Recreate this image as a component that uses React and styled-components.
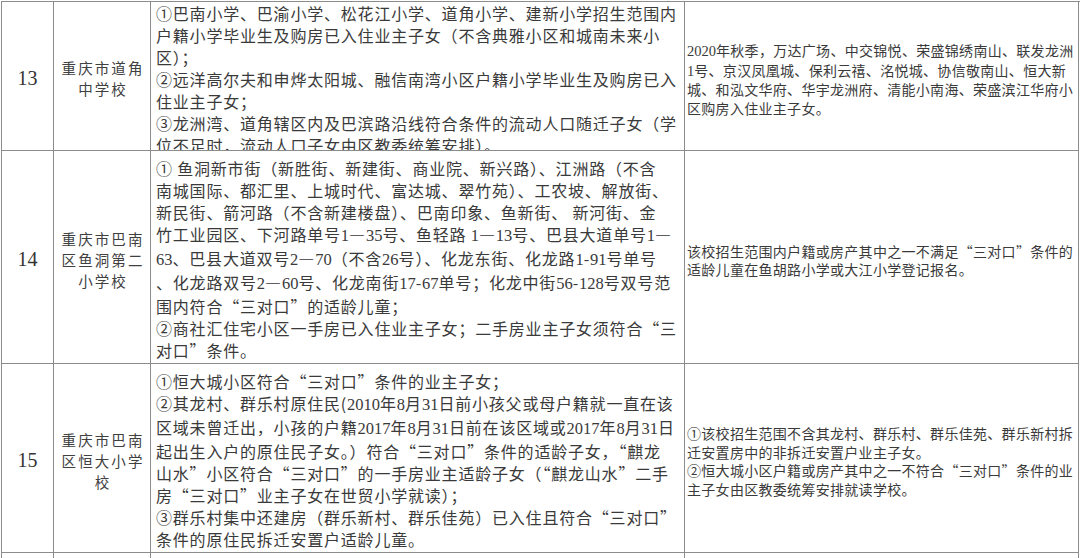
import React from "react";
import styled, { createGlobalStyle } from "styled-components";

const GlobalStyle = createGlobalStyle`
  html, body {
    margin: 0;
    padding: 0;
    background: #fff;
  }
  body {
    font-family: "Noto Sans CJK SC", "Liberation Serif", serif;
    color: #3a3a3a;
  }
`;

const Sheet = styled.div`
  margin: 1px 0 0 1px;
  width: 1078px;
  border-top: 1px solid #8c8c8c;
  border-left: 1px solid #8c8c8c;
  background: #fff;
`;

const Row = styled.div`
  display: grid;
  grid-template-columns: 52px 97px 534px 394px;
  height: ${(p) => p.$h}px;
`;

const Cell = styled.div`
  box-sizing: border-box;
  border-right: 1px solid #8c8c8c;
  border-bottom: 1px solid #8c8c8c;
  overflow: hidden;
  display: flex;
  flex-direction: column;
  justify-content: ${(p) => (p.$top ? "flex-start" : "center")};
`;

const NumCell = styled(Cell)`
  align-items: center;
  padding-top: 5px;
  font-family: "Liberation Serif", serif;
  font-size: 20px;
  color: #333;
`;

const NameCell = styled(Cell)`
  align-items: center;
  padding-top: 4px;
  font-size: 14.5px;
  line-height: 21px;
  letter-spacing: 2.1px;
  text-indent: 2.1px;
  text-align: center;
  color: #404040;
`;

const RangeCell = styled(Cell)`
  padding: ${(p) => (p.$top ? "0" : "4px")} 0 0 5px;
  font-size: 16px;
  line-height: 22px;
  letter-spacing: 0.8px;
`;

const NoteCell = styled(Cell)`
  padding: 6px 0 0 2px;
  font-size: 14px;
  line-height: 18.5px;
  letter-spacing: 0.3px;
`;

const Line = styled.div`
  white-space: nowrap;
`;

const Digits = styled.span`
  font-family: "Liberation Serif", serif;
  letter-spacing: 0;
  font-size: ${(p) => (p.$small ? "14.5px" : "16.5px")};
`;

const withDigits = (text, small) =>
  text.split(/(\d+)/).map((part, i) =>
    /^\d+$/.test(part) ? (
      <Digits key={i} $small={small}>
        {part}
      </Digits>
    ) : (
      part
    )
  );

const rows = [
  {
    no: "13",
    h: 149,
    top: true,
    name: ["重庆市道角", "中学校"],
    range: [
      "①巴南小学、巴渝小学、松花江小学、道角小学、建新小学招生范围内",
      "户籍小学毕业生及购房已入住业主子女（不含典雅小区和城南未来小",
      "区）；",
      "②远洋高尔夫和申烨太阳城、融信南湾小区户籍小学毕业生及购房已入",
      "住业主子女；",
      "③龙洲湾、道角辖区内及巴滨路沿线符合条件的流动人口随迁子女（学",
      "位不足时，流动人口子女由区教委统筹安排）。",
    ],
    note: [
      "2020年秋季，万达广场、中交锦悦、荣盛锦绣南山、联发龙洲",
      "1号、京汉凤凰城、保利云禧、洺悦城、协信敬南山、恒大新",
      "城、和泓文华府、华宇龙洲府、清能小南海、荣盛滨江华府小",
      "区购房入住业主子女。",
    ],
  },
  {
    no: "14",
    h: 213,
    name: ["重庆市巴南", "区鱼洞第二", "小学校"],
    range: [
      "① 鱼洞新市街（新胜街、新建街、商业院、新兴路）、江洲路（不含",
      "南城国际、都汇里、上城时代、富达城、翠竹苑）、工农坡、解放街、",
      "新民街、箭河路（不含新建楼盘）、巴南印象、鱼新街、 新河街、金",
      "竹工业园区、下河路单号1—35号、鱼轻路 1—13号、巴县大道单号1—",
      "63、巴县大道双号2—70（不含26号）、化龙东街、化龙路1-91号单号",
      "、化龙路双号2—60号、化龙南街17-67单号；化龙中街56-128号双号范",
      "围内符合“三对口”的适龄儿童；",
      "②商社汇住宅小区一手房已入住业主子女；二手房业主子女须符合“三",
      "对口”条件。",
    ],
    note: [
      "该校招生范围内户籍或房产其中之一不满足“三对口”条件的",
      "适龄儿童在鱼胡路小学或大江小学登记报名。",
    ],
  },
  {
    no: "15",
    h: 189,
    name: ["重庆市巴南", "区恒大小学", "校"],
    range: [
      "①恒大城小区符合“三对口”条件的业主子女；",
      "②其龙村、群乐村原住民(2010年8月31日前小孩父或母户籍就一直在该",
      "区域未曾迁出，小孩的户籍2017年8月31日前在该区域或2017年8月31日",
      "起出生入户的原住民子女。）符合“三对口”条件的适龄子女，“麒龙",
      "山水”小区符合“三对口”的一手房业主适龄子女（“麒龙山水”二手",
      "房“三对口”业主子女在世贸小学就读）；",
      "③群乐村集中还建房（群乐新村、群乐佳苑）已入住且符合“三对口”",
      "条件的原住民拆迁安置户适龄儿童。",
    ],
    note: [
      "①该校招生范围不含其龙村、群乐村、群乐佳苑、群乐新村拆",
      "迁安置房中的非拆迁安置户业主子女。",
      "②恒大城小区户籍或房产其中之一不符合“三对口”条件的业",
      "主子女由区教委统筹安排就读学校。",
    ],
  },
];

export default function App() {
  return (
    <>
      <GlobalStyle />
      <Sheet lang="zh-CN">
        {rows.map((r) => (
          <Row key={r.no} $h={r.h}>
            <NumCell $top={false}>{r.no}</NumCell>
            <NameCell>
              {r.name.map((t) => (
                <Line key={t}>{t}</Line>
              ))}
            </NameCell>
            <RangeCell $top={r.top}>
              {r.range.map((t, i) => (
                <Line key={i}>{withDigits(t)}</Line>
              ))}
            </RangeCell>
            <NoteCell>
              {r.note.map((t, i) => (
                <Line key={i}>{withDigits(t, true)}</Line>
              ))}
            </NoteCell>
          </Row>
        ))}
        <Row $h={20}>
          <Cell />
          <Cell />
          <Cell />
          <Cell />
        </Row>
      </Sheet>
    </>
  );
}
